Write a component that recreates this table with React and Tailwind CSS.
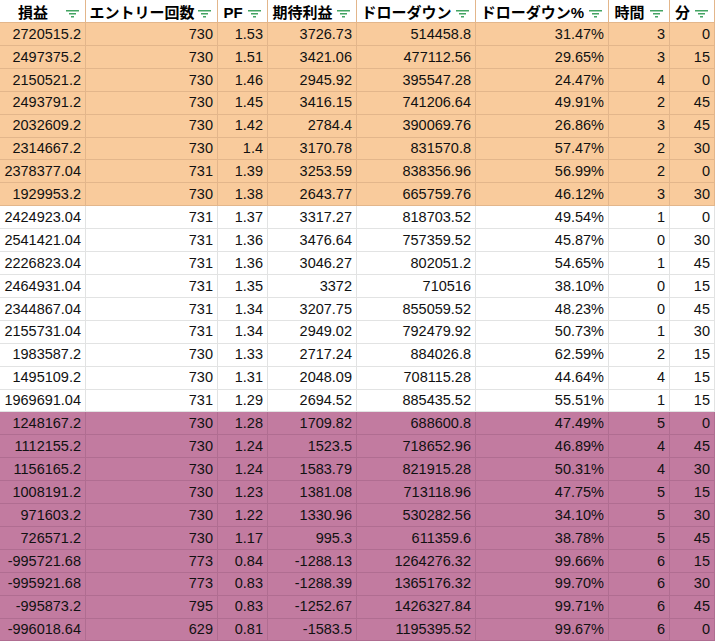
import React from "react";

const headers = ["損益", "エントリー回数", "PF", "期待利益", "ドローダウン", "ドローダウン%", "時間", "分"];

const rows = [
  ["o", "2720515.2", "730", "1.53", "3726.73", "514458.8", "31.47%", "3", "0"],
  ["o", "2497375.2", "730", "1.51", "3421.06", "477112.56", "29.65%", "3", "15"],
  ["o", "2150521.2", "730", "1.46", "2945.92", "395547.28", "24.47%", "4", "0"],
  ["o", "2493791.2", "730", "1.45", "3416.15", "741206.64", "49.91%", "2", "45"],
  ["o", "2032609.2", "730", "1.42", "2784.4", "390069.76", "26.86%", "3", "45"],
  ["o", "2314667.2", "730", "1.4", "3170.78", "831570.8", "57.47%", "2", "30"],
  ["o", "2378377.04", "731", "1.39", "3253.59", "838356.96", "56.99%", "2", "0"],
  ["o", "1929953.2", "730", "1.38", "2643.77", "665759.76", "46.12%", "3", "30"],
  ["w", "2424923.04", "731", "1.37", "3317.27", "818703.52", "49.54%", "1", "0"],
  ["w", "2541421.04", "731", "1.36", "3476.64", "757359.52", "45.87%", "0", "30"],
  ["w", "2226823.04", "731", "1.36", "3046.27", "802051.2", "54.65%", "1", "45"],
  ["w", "2464931.04", "731", "1.35", "3372", "710516", "38.10%", "0", "15"],
  ["w", "2344867.04", "731", "1.34", "3207.75", "855059.52", "48.23%", "0", "45"],
  ["w", "2155731.04", "731", "1.34", "2949.02", "792479.92", "50.73%", "1", "30"],
  ["w", "1983587.2", "730", "1.33", "2717.24", "884026.8", "62.59%", "2", "15"],
  ["w", "1495109.2", "730", "1.31", "2048.09", "708115.28", "44.64%", "4", "15"],
  ["w", "1969691.04", "731", "1.29", "2694.52", "885435.52", "55.51%", "1", "15"],
  ["p", "1248167.2", "730", "1.28", "1709.82", "688600.8", "47.49%", "5", "0"],
  ["p", "1112155.2", "730", "1.24", "1523.5", "718652.96", "46.89%", "4", "45"],
  ["p", "1156165.2", "730", "1.24", "1583.79", "821915.28", "50.31%", "4", "30"],
  ["p", "1008191.2", "730", "1.23", "1381.08", "713118.96", "47.75%", "5", "15"],
  ["p", "971603.2", "730", "1.22", "1330.96", "530282.56", "34.10%", "5", "30"],
  ["p", "726571.2", "730", "1.17", "995.3", "611359.6", "38.78%", "5", "45"],
  ["p", "-995721.68", "773", "0.84", "-1288.13", "1264276.32", "99.66%", "6", "15"],
  ["p", "-995921.68", "773", "0.83", "-1288.39", "1365176.32", "99.70%", "6", "30"],
  ["p", "-995873.2", "795", "0.83", "-1252.67", "1426327.84", "99.71%", "6", "45"],
  ["p", "-996018.64", "629", "0.81", "-1583.5", "1195395.52", "99.67%", "6", "0"],
];

const rowStyles = {
  o: "bg-[#f9cb9c] border-[#e3b68b]",
  w: "bg-white border-[#e2e3e3]",
  p: "bg-[#c27ba0] border-[#b06d91]",
};

function FilterIcon() {
  return (
    <svg width="13" height="8" viewBox="0 0 13 8" className="shrink-0 mt-[5px]">
      <rect x="0" y="0" width="13" height="1.5" fill="#43a463" />
      <rect x="3" y="3" width="7" height="1.5" fill="#43a463" />
      <rect x="5" y="6" width="3" height="1.5" fill="#43a463" />
    </svg>
  );
}

export default function App() {
  return (
    <div
      className="w-[715px] h-[642px] overflow-hidden bg-white text-black"
      style={{ fontFamily: '"Liberation Sans", "Noto Sans CJK JP", sans-serif' }}
    >
      <div className="grid grid-cols-[86px_132px_50px_89px_119px_133px_61px_45px]">
        {headers.map((h, i) => (
          <div
            key={i}
            className="h-[23px] flex items-center border-r border-b border-[#e3b68b] bg-white pr-[6px]"
          >
            <span className="flex-1 text-center font-bold text-[15px] leading-none pt-[2px]">{h}</span>
            <FilterIcon />
          </div>
        ))}
        {rows.map((r, ri) =>
          r.slice(1).map((c, ci) => (
            <div
              key={ri + "-" + ci}
              className={
                "h-[22.92px] flex items-center justify-end border-r border-b pr-[4px] text-[14.5px] leading-none text-[#111] " +
                rowStyles[r[0]]
              }
            >
              {c}
            </div>
          ))
        )}
      </div>
    </div>
  );
}
